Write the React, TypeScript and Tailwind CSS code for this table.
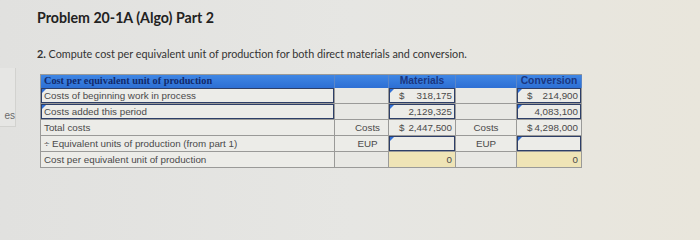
import React from 'react';

type Cell = {
  text?: string;
  dollar?: boolean;
  align?: 'left' | 'right' | 'center' | 'mid';
  input?: boolean;
  yellow?: boolean;
  light?: boolean;
};

const cols = ['w-[294px]', 'w-[54px]', 'w-[67px]', 'w-[61px]', 'w-[65px]'];

const rows: Cell[][] = [
  [
    { text: 'Costs of beginning work in process', input: true },
    { light: true },
    { text: '318,175', dollar: true, align: 'right', input: true },
    { light: true },
    { text: '214,900', dollar: true, align: 'right', input: true }
  ],
  [
    { text: 'Costs added this period', input: true },
    { light: true },
    { text: '2,129,325', align: 'right', input: true },
    { light: true },
    { text: '4,083,100', align: 'right', input: true }
  ],
  [
    { text: 'Total costs' },
    { text: 'Costs', align: 'mid' },
    { text: '2,447,500', dollar: true, align: 'right' },
    { text: 'Costs', align: 'center' },
    { text: '4,298,000', dollar: true, align: 'right' }
  ],
  [
    { text: '÷ Equivalent units of production (from part 1)' },
    { text: 'EUP', align: 'mid' },
    { input: true },
    { text: 'EUP', align: 'center' },
    { input: true }
  ],
  [
    { text: 'Cost per equivalent unit of production' },
    { light: true },
    { text: '0', align: 'right', yellow: true },
    { light: true },
    { text: '0', align: 'right', yellow: true }
  ]
];

const TableCell = ({ cell, width }: { cell: Cell; width: string }) => {
  const bg = cell.yellow ? 'bg-[#efe4b6]' : cell.light ? 'bg-[#e8e8e4]' : 'bg-[#ecece8]';
  const justify =
    cell.align === 'right'
      ? 'justify-end px-[3px]'
      : cell.align === 'center'
        ? 'justify-center px-[3px]'
        : cell.align === 'mid'
          ? 'justify-center pl-[12px]'
          : 'justify-start px-[3px]';
  return (
    <div
      className={`${width} ${bg} relative h-[16px] border-r border-b border-[#9a9a98] flex items-center ${justify} text-[9.8px] leading-none text-[#4a4a4a] ${
        cell.input ? 'shadow-[inset_0_0_0_1px_#2e3f68]' : ''
      }`}
    >
      {cell.input && (
        <span className="absolute left-[1px] top-[1px] w-0 h-0 border-t-[4px] border-t-[#2f6fd6] border-r-[4px] border-r-transparent" />
      )}
      {cell.dollar && <span className="absolute left-[10px]">$</span>}
      {cell.text}
    </div>
  );
};

export default function App() {
  return (
    <div className="w-[700px] h-[240px] overflow-hidden flex bg-linear-to-r from-[#e1e1df] via-[#e6e6e3] to-[#e9e6dc] font-['Liberation_Sans',Arial,sans-serif]">
      <div className="w-[16px] pt-[68px]">
        <div className="h-[59px] border-r border-b border-[#d2d2cf] bg-[#e6e6e4] flex items-end justify-end pb-[3px] text-[10px] text-[#6a6a6a]">
          es
        </div>
      </div>
      <div className="flex-1 pl-[21px] pt-[9px]">
        <h1 className="font-['Lato',sans-serif] font-bold text-[14.2px] leading-[18px] text-[#222]">
          Problem 20-1A (Algo) Part 2
        </h1>
        <p className="mt-[20px] font-['Lato',sans-serif] text-[10.8px] leading-[14px] text-[#333]">
          <span className="font-bold">2.</span> Compute cost per equivalent unit of production for both direct
          materials and conversion.
        </p>
        <div className="mt-[13px] ml-[3px] w-fit border-l border-t border-[#9a9a98]">
          <div className="flex h-[13px] bg-linear-to-b from-[#3f86e4] to-[#2d6fd4] text-[10.3px] font-bold leading-none">
            <div className="w-[294px] px-[3px] flex items-center text-[#12296a] font-['Liberation_Serif',serif] text-[10.3px] border-r border-[#5a86c8]">
              Cost per equivalent unit of production
            </div>
            <div className="w-[54px] border-r border-[#5a86c8]" />
            <div className="w-[67px] flex items-center justify-center text-[#1a3680] border-r border-[#5a86c8]">
              Materials
            </div>
            <div className="w-[61px] border-r border-[#5a86c8]" />
            <div className="w-[65px] flex items-center justify-center text-[#1a3680] border-r border-[#5a86c8]">
              Conversion
            </div>
          </div>
          {rows.map((row, i) => (
            <div key={i} className="flex">
              {row.map((cell, j) => (
                <TableCell key={j} cell={cell} width={cols[j]} />
              ))}
            </div>
          ))}
        </div>
      </div>
    </div>
  );
}
